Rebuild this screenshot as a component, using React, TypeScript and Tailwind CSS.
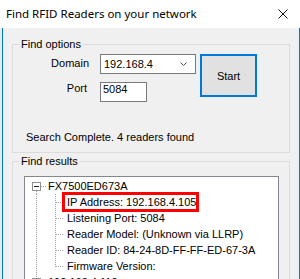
import React from "react";

const DOT = "#a0a0a0";

function RootGutter({ first, open }: { first?: boolean; open?: boolean }) {
  return (
    <svg width="23" height="16" shapeRendering="crispEdges" className="shrink-0">
      {!first && <line x1="11.5" y1="0" x2="11.5" y2="4" stroke={DOT} strokeDasharray="1 1" />}
      <line x1="16" y1="8.5" x2="21" y2="8.5" stroke={DOT} strokeDasharray="1 1" />
      {open && <line x1="11.5" y1="13" x2="11.5" y2="16" stroke={DOT} strokeDasharray="1 1" />}
      <rect x="7.5" y="4.5" width="8" height="8" fill="#fff" stroke="#919191" />
      <line x1="9" y1="8.5" x2="14" y2="8.5" stroke="#222" />
      {!open && <line x1="11.5" y1="6" x2="11.5" y2="11" stroke="#222" />}
    </svg>
  );
}

function ChildGutter({ last }: { last?: boolean }) {
  return (
    <svg width="42" height="16" shapeRendering="crispEdges" className="shrink-0">
      <line x1="11.5" y1="0" x2="11.5" y2="16" stroke={DOT} strokeDasharray="1 1" />
      <line x1="30.5" y1="0" x2="30.5" y2={last ? 9 : 16} stroke={DOT} strokeDasharray="1 1" />
      <line x1="31" y1="8.5" x2="39" y2="8.5" stroke={DOT} strokeDasharray="1 1" />
    </svg>
  );
}

function Child({ text, last, marked }: { text: string; last?: boolean; marked?: boolean }) {
  return (
    <div className="relative flex h-[16px] items-center leading-[16px]">
      <ChildGutter last={last} />
      <span className="whitespace-nowrap">{text}</span>
      {marked && (
        <div className="absolute left-[37px] top-[-2px] h-[20px] w-[137px] border-[3px] border-[#ff0000]" />
      )}
    </div>
  );
}

export default function App() {
  return (
    <div className="flex h-[279px] w-[300px] flex-col overflow-hidden bg-white font-['Liberation_Sans',Arial,sans-serif] text-[11px] text-black">
      <div className="flex h-[28px] shrink-0 items-center justify-between bg-white pl-[6px] pr-[12px]">
        <span className="font-['Noto_Sans',sans-serif] text-[11.5px] leading-[14px]">
          Find RFID Readers on your network
        </span>
        <svg width="10" height="10" viewBox="0 0 10 10">
          <path d="M0.5 0.5L9.5 9.5M9.5 0.5L0.5 9.5" stroke="#111" strokeWidth="1" />
        </svg>
      </div>

      <div className="flex min-h-0 flex-1">
        <div className="w-[2px] shrink-0 bg-[#e9e9e9]" />
        <div className="flex-1 border-x border-[#0078d7] bg-[#f0f0f0] pl-[9px] pr-[9px]">
          <fieldset className="mt-[10px] h-[115px] border border-[#dcdcdc]">
            <legend className="ml-[6px] px-[2px] leading-[12px]">Find options</legend>
            <div className="mt-[4px] flex items-start">
              <div className="flex flex-col">
                <div className="flex h-[20px] items-start">
                  <span className="w-[76px] text-right leading-[18px]">Domain</span>
                  <div className="ml-[11px] flex h-[20px] w-[96px] items-start justify-between border border-[#7a7a7a] bg-white pl-[3px] pr-[8px]">
                    <span className="leading-[18px]">192.168.4</span>
                    <svg width="7" height="4" viewBox="0 0 7 4" className="mt-[7px]">
                      <path d="M0.5 0.5L3.5 3.5L6.5 0.5" fill="none" stroke="#555" />
                    </svg>
                  </div>
                </div>
                <div className="mt-[8px] flex h-[20px] items-start">
                  <span className="w-[76px] pr-[2px] text-right leading-[12px]">Port</span>
                  <div className="ml-[11px] h-[20px] w-[47px] border border-[#7a7a7a] bg-white pl-[2px] leading-[12px]">
                    5084
                  </div>
                </div>
              </div>
              <button className="ml-[4px] flex h-[43px] w-[57px] items-center justify-center border-2 border-[#0078d7] bg-[#e1e1e1] leading-[12px]">
                Start
              </button>
            </div>
            <div className="ml-[13px] mt-[29px] leading-[12px]">Search Complete. 4 readers found</div>
          </fieldset>

          <fieldset className="mt-[2px] h-[160px] border border-[#dcdcdc]">
            <legend className="ml-[6px] px-[2px] leading-[12px]">Find results</legend>
            <div className="ml-[11px] mr-[10px] mt-[9px] h-[140px] border border-[#828790] bg-white pt-[1px]">
              <div className="flex h-[16px] items-center leading-[16px]">
                <RootGutter first open />
                <span>FX7500ED673A</span>
              </div>
              <Child text="IP Address: 192.168.4.105" marked />
              <Child text="Listening Port: 5084" />
              <Child text="Reader Model: (Unknown via LLRP)" />
              <Child text="Reader ID: 84-24-8D-FF-FF-ED-67-3A" />
              <Child text="Firmware Version:" last />
              <div className="flex h-[16px] items-center leading-[16px]">
                <RootGutter />
                <span>192.168.4.110</span>
              </div>
            </div>
          </fieldset>
        </div>
      </div>
    </div>
  );
}
